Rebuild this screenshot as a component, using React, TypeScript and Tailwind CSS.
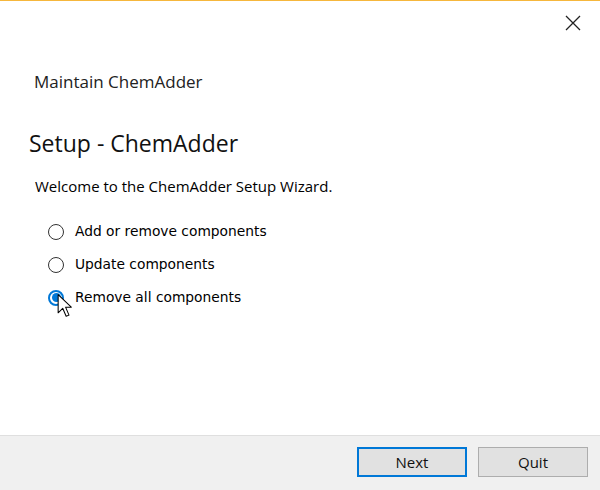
import React from "react";

function Radio({ checked }: { checked?: boolean }) {
  return checked ? (
    <span className="w-[16px] h-[16px] rounded-full border-[2px] border-[#0078d7] bg-white flex items-center justify-center shrink-0">
      <span className="w-[9px] h-[9px] rounded-full bg-[#0078d7]" />
    </span>
  ) : (
    <span className="w-[16px] h-[16px] rounded-full border-[1.5px] border-[#333333] bg-white shrink-0" />
  );
}

export default function App() {
  const options = [
    { label: "Add or remove components", checked: false },
    { label: "Update components", checked: false },
    { label: "Remove all components", checked: true },
  ];
  return (
    <div
      className="w-[600px] h-[490px] bg-white flex flex-col border-t border-[#f6b73c] text-[#000]"
      style={{ fontFamily: '"Open Sans", "Noto Sans", sans-serif' }}
    >
      <div className="flex-1 flex flex-col relative">
        <div className="flex justify-end pr-[19px] pt-[14px]">
          <svg width="16" height="16" viewBox="0 0 16 16">
            <path d="M1 1 L15 15 M15 1 L1 15" stroke="#222" strokeWidth="1.3" />
          </svg>
        </div>
        <div className="pl-[34px] mt-[40px] text-[17px] leading-[22px] text-[#222]">Maintain ChemAdder</div>
        <div className="pl-[29px] mt-[35px] text-[23px] leading-[30px] text-[#111]">Setup - ChemAdder</div>
        <div className="pl-[35px] mt-[18px] text-[15px] leading-[20px]">Welcome to the ChemAdder Setup Wizard.</div>
        <div className="pl-[48px] mt-[26px] flex flex-col gap-[14px]">
          {options.map((o) => (
            <div key={o.label} className="flex items-center gap-[11px] h-[19px] relative">
              <Radio checked={o.checked} />
              <span className="text-[13.8px] leading-[19px]" style={{ fontFamily: '"DejaVu Sans", sans-serif' }}>
                {o.label}
              </span>
              {o.checked && (
                <svg className="absolute left-[9px] top-[5px]" width="16" height="26" viewBox="0 0 14 22">
                  <path d="M1 1 L1 17 L5 13 L8 20 L10.5 19 L7.5 12 L12.5 12 Z" fill="white" stroke="black" strokeWidth="0.9" strokeLinejoin="round" />
                </svg>
              )}
            </div>
          ))}
        </div>
      </div>
      <div className="h-[55px] bg-[#f0f0f0] border-t border-[#dfdfdf] flex justify-end items-start pt-[11px] pr-[12px] gap-[11px]">
        <button className="w-[110px] h-[30px] bg-[#e1e1e1] border-[2px] border-[#0078d7] text-[15px] text-[#111]">Next</button>
        <button className="w-[110px] h-[30px] bg-[#e1e1e1] border border-[#adadad] text-[15px] text-[#111]">Quit</button>
      </div>
    </div>
  );
}
